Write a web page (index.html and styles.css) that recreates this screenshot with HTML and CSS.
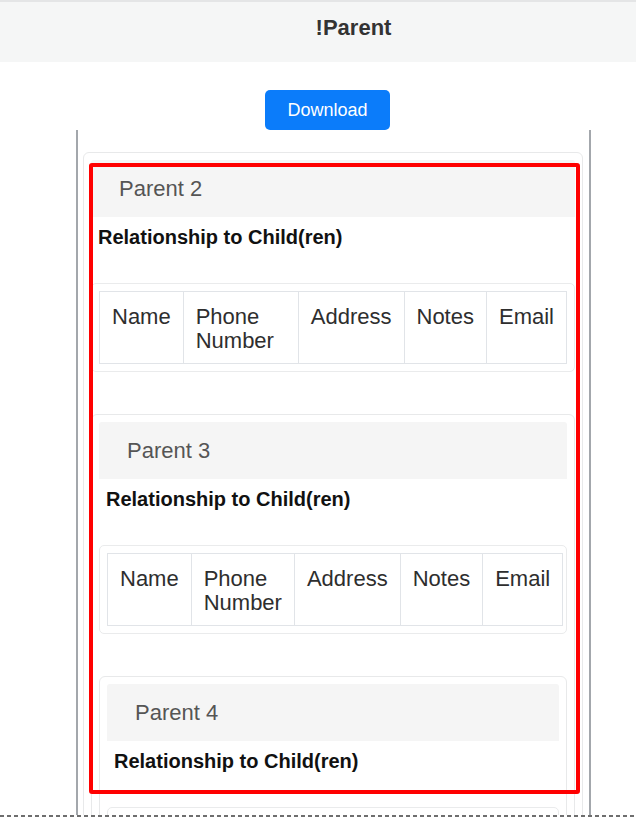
FILE: index.html
```html
<!DOCTYPE html>
<html lang="en">
<head>
<meta charset="utf-8">
<title>!Parent</title>
<link rel="stylesheet" href="styles.css">
</head>
<body>
<div class="viewport">
  <header class="topbar"><h1 class="title">!Parent</h1></header>
  <div class="actions"><button class="btn" type="button">Download</button></div>
  <main class="container">
    <section class="card">
      <div class="card-header">Parent 2</div>
      <h6 class="rel">Relationship to Child(ren)</h6>
      <div class="table-wrap">
        <table class="grid">
          <thead><tr><th>Name</th><th>Phone Number</th><th>Address</th><th>Notes</th><th>Email</th></tr></thead>
        </table>
      </div>
      <section class="card">
        <div class="card-header">Parent 3</div>
        <h6 class="rel">Relationship to Child(ren)</h6>
        <div class="table-wrap">
          <table class="grid">
            <thead><tr><th>Name</th><th>Phone Number</th><th>Address</th><th>Notes</th><th>Email</th></tr></thead>
          </table>
        </div>
        <section class="card">
          <div class="card-header">Parent 4</div>
          <h6 class="rel">Relationship to Child(ren)</h6>
          <div class="table-wrap table-wrap-empty"></div>
        </section>
      </section>
    </section>
  </main>
  <div class="highlight"></div>
</div>
<div class="dashed"></div>
</body>
</html>
```

FILE: styles.css
```css
html, body {
  margin: 0;
  padding: 0;
  background: #ffffff;
  font-family: "Liberation Sans", Arial, sans-serif;
}

.viewport {
  position: relative;
  height: 815px;
  overflow: hidden;
}

.topbar {
  border-top: 2px solid #e4e5e6;
  height: 60px;
  background: #f5f6f6;
  box-sizing: content-box;
}

.title {
  margin: 0;
  padding: 12px 0 0 71px;
  text-align: center;
  font-size: 22px;
  line-height: 28px;
  font-weight: 700;
  color: #333333;
}

.actions {
  display: flex;
  justify-content: center;
  padding: 28px 0 0 19px;
}

.btn {
  width: 125px;
  height: 40px;
  border: none;
  border-radius: 5px;
  background: #0b7cfa;
  color: #ffffff;
  font-family: "Liberation Sans", Arial, sans-serif;
  font-size: 18px;
  padding: 0;
}

.container {
  margin-left: 76px;
  width: 515px;
  box-sizing: border-box;
  border-left: 2px solid #a3a7ac;
  border-right: 2px solid #a3a7ac;
  padding: 22px 6px 0 5px;
  min-height: 700px;
}

.card {
  background: #ffffff;
  border: 1px solid #e8e9ea;
  border-radius: 6px;
  padding: 7px;
}

.card .card {
  margin-top: 42px;
}

.card-header {
  height: 57px;
  line-height: 57px;
  background: #f5f5f5;
  padding-left: 28px;
  font-size: 22px;
  color: #555555;
  border-radius: 3px 3px 0 0;
}

.rel {
  margin: 8px 0 34px;
  padding-left: 7px;
  font-size: 20px;
  line-height: 24px;
  font-weight: 700;
  color: #111111;
}

.table-wrap {
  border: 1px solid #eaebec;
  border-radius: 5px;
  padding: 7px;
}

.table-wrap-empty {
  height: 72px;
}

.grid {
  width: 100%;
  border-collapse: collapse;
}

.grid th {
  border: 1px solid #e1e4e8;
  padding: 13px 12px 10px;
  font-size: 22px;
  line-height: 24px;
  font-weight: 400;
  text-align: left;
  vertical-align: top;
  color: #2e2e2e;
}

.highlight {
  position: absolute;
  top: 163px;
  left: 89px;
  width: 491px;
  height: 631px;
  box-sizing: border-box;
  border: 4px solid #ff0000;
  border-radius: 3px;
  pointer-events: none;
}

.dashed {
  height: 2px;
  background: repeating-linear-gradient(90deg, #6e6e6e 0 4px, transparent 4px 7px);
}
```
